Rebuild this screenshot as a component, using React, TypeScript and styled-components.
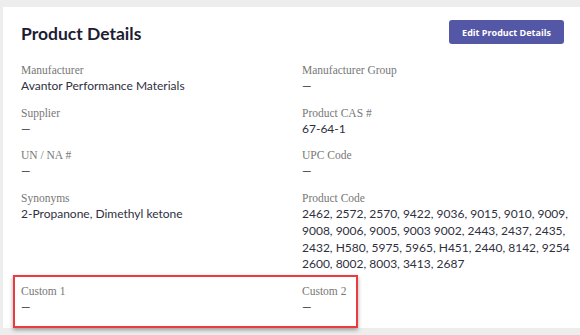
import styled, { createGlobalStyle } from 'styled-components';

const GlobalStyle = createGlobalStyle`
  html, body {
    margin: 0;
    padding: 0;
    background: #ededed;
    overflow: hidden;
  }
`;

const Page = styled.div`
  width: 580px;
  height: 335px;
  padding: 7px 0 0 3px;
  box-sizing: border-box;
  background: #ededed;
`;

const Card = styled.div`
  position: relative;
  width: 600px;
  height: 321px;
  box-sizing: border-box;
  padding: 13px 0 0 18px;
  background: #fff;
`;

const Header = styled.div`
  display: flex;
  justify-content: space-between;
  align-items: center;
  width: 543px;
  height: 24px;
`;

const Title = styled.h1`
  margin: 0;
  padding-top: 2px;
  font-family: Lato, 'Noto Sans', sans-serif;
  font-weight: 700;
  font-size: 17.5px;
  color: #1c1d33;
`;

const EditButton = styled.button`
  width: 115px;
  height: 24px;
  border: none;
  border-radius: 3px;
  background: #5457a6;
  color: #fff;
  font-family: 'Open Sans', sans-serif;
  font-weight: 700;
  font-size: 9px;
  cursor: pointer;
`;

const Grid = styled.div`
  display: grid;
  grid-template-columns: 281px 270px;
  row-gap: 10px;
  margin-top: 18px;
`;

const Field = styled.div`
  display: flex;
  flex-direction: column;
`;

const Label = styled.div`
  font-family: 'Liberation Serif', serif;
  font-size: 11.5px;
  line-height: 16px;
  color: #777;
`;

const Value = styled.div`
  font-family: Lato, 'Noto Sans', sans-serif;
  font-size: 12px;
  line-height: 16.7px;
  color: #303040;
  white-space: nowrap;
`;

const Highlight = styled.div`
  position: absolute;
  left: 10px;
  top: 268px;
  width: 345px;
  height: 53px;
  box-sizing: border-box;
  border: 2px solid #ea3b40;
  box-shadow: 0 2px 4px rgba(0, 0, 0, 0.35);
  pointer-events: none;
`;

const fields: { label: string; value: string[] }[] = [
  { label: 'Manufacturer', value: ['Avantor Performance Materials'] },
  { label: 'Manufacturer Group', value: ['—'] },
  { label: 'Supplier', value: ['—'] },
  { label: 'Product CAS #', value: ['67-64-1'] },
  { label: 'UN / NA #', value: ['—'] },
  { label: 'UPC Code', value: ['—'] },
  { label: 'Synonyms', value: ['2-Propanone, Dimethyl ketone'] },
  {
    label: 'Product Code',
    value: [
      '2462, 2572, 2570, 9422, 9036, 9015, 9010, 9009,',
      '9008, 9006, 9005, 9003 9002, 2443, 2437, 2435,',
      '2432, H580, 5975, 5965, H451, 2440, 8142, 9254',
      '2600, 8002, 8003, 3413, 2687',
    ],
  },
  { label: 'Custom 1', value: ['—'] },
  { label: 'Custom 2', value: ['—'] },
];

export default function App() {
  return (
    <>
      <GlobalStyle />
      <Page>
        <Card>
          <Header>
            <Title>Product Details</Title>
            <EditButton>Edit Product Details</EditButton>
          </Header>
          <Grid>
            {fields.map((f) => (
              <Field key={f.label}>
                <Label>{f.label}</Label>
                {f.value.map((line, i) => (
                  <Value key={i}>{line}</Value>
                ))}
              </Field>
            ))}
          </Grid>
          <Highlight />
        </Card>
      </Page>
    </>
  );
}
